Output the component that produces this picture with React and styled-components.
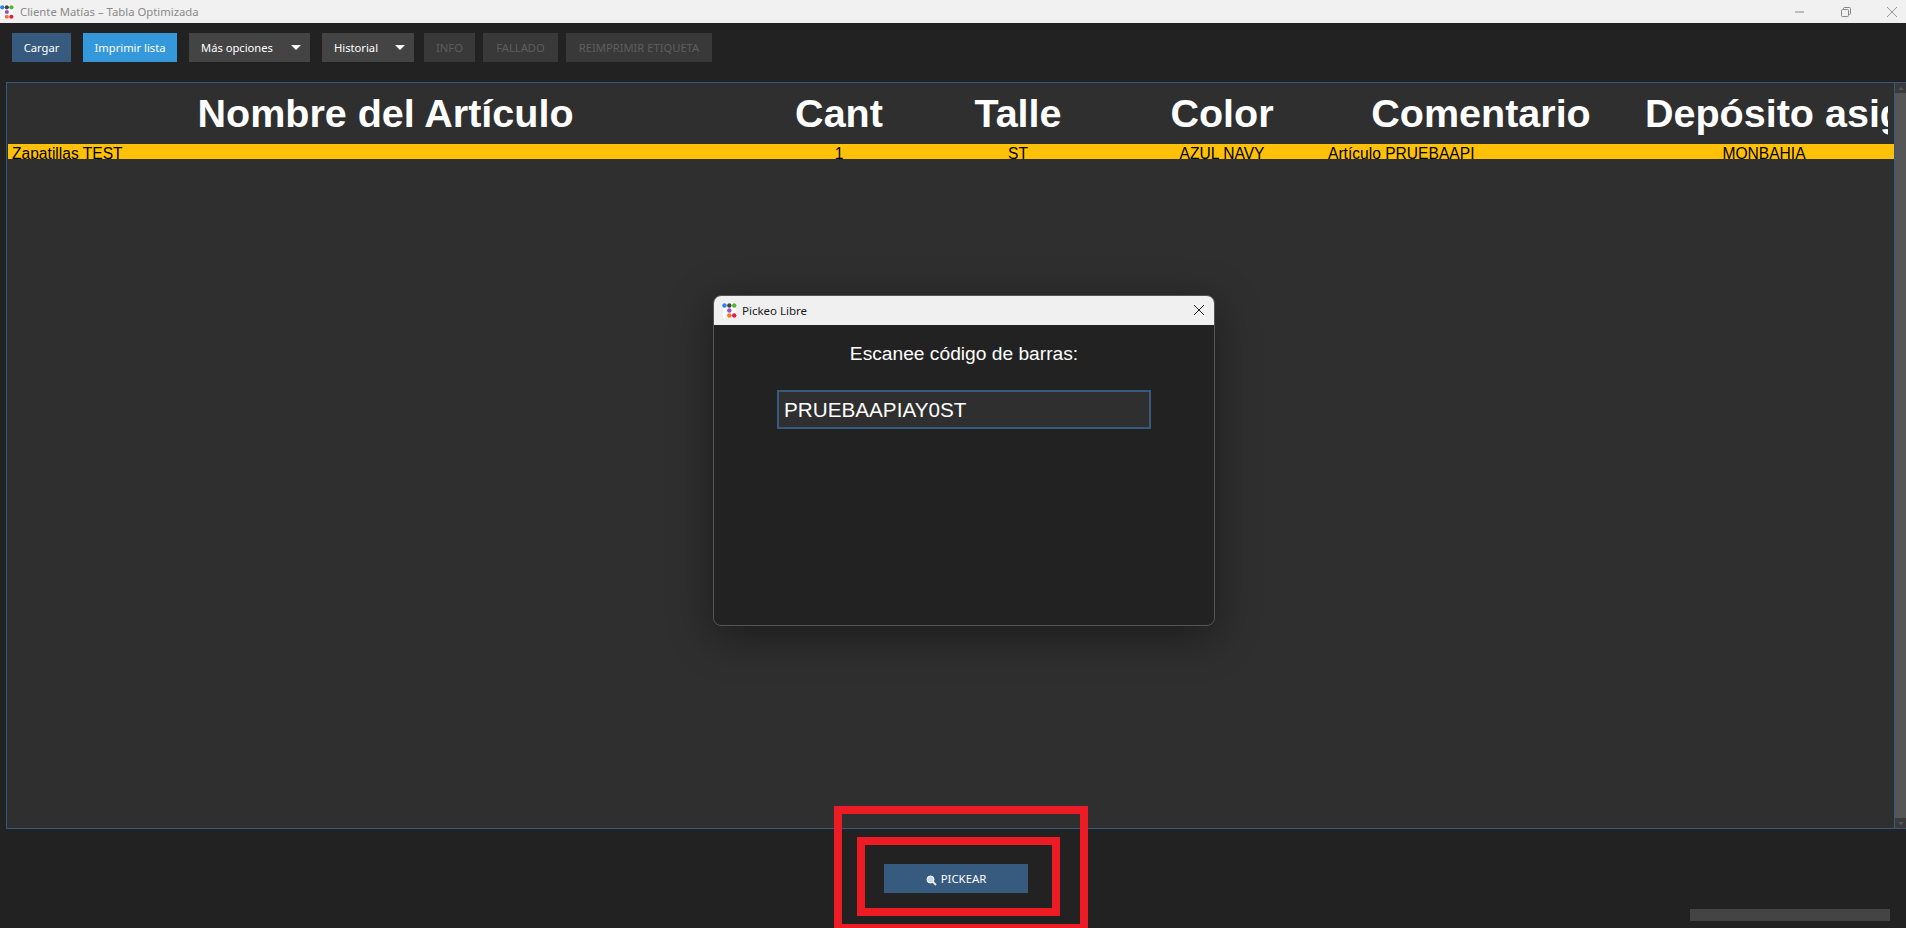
import React from "react";
import styled, { createGlobalStyle } from "styled-components";

const Global = createGlobalStyle`
  html, body { margin: 0; padding: 0; height: 100%; background: #222222; overflow: hidden; }
  #root { height: 100%; }
  * { box-sizing: border-box; }
`;

const Page = styled.div`
  position: relative;
  width: 1906px;
  height: 928px;
  display: flex;
  flex-direction: column;
  background: #222222;
  overflow: hidden;
`;

const TitleBar = styled.header`
  height: 23px;
  flex: none;
  display: flex;
  align-items: center;
  background: #f1f1f1;
`;

const WindowTitle = styled.span`
  margin-left: 6px;
  font: 11.3px "Noto Sans", sans-serif;
  color: #8a8a8a;
  white-space: nowrap;
`;

const WindowControls = styled.div`
  margin-left: auto;
  display: flex;
  align-items: center;
  gap: 34px;
  padding-right: 8px;
`;

const Toolbar = styled.nav`
  height: 59px;
  flex: none;
  display: flex;
  align-items: flex-start;
  padding: 10px 0 0 12px;
`;

const ToolButton = styled.div`
  height: 29px;
  width: ${(p) => p.$w}px;
  margin-right: ${(p) => p.$gap}px;
  display: flex;
  align-items: center;
  justify-content: ${(p) => (p.$menu ? "flex-start" : "center")};
  padding-left: ${(p) => (p.$menu ? "12px" : "0")};
  background: ${(p) => p.$bg};
  color: ${(p) => p.$fg || "#ffffff"};
  font: 11.2px "Noto Sans", sans-serif;
  white-space: nowrap;
  flex: none;
`;

const Caret = styled.span`
  margin-left: auto;
  margin-right: 9px;
  width: 0;
  height: 0;
  border-left: 5px solid transparent;
  border-right: 5px solid transparent;
  border-top: 5px solid #ffffff;
`;

const TableFrame = styled.section`
  flex: none;
  height: 747px;
  margin-left: 6px;
  display: flex;
  background: #2f2f2f;
  border: 1px solid #315b82;
  border-right: none;
`;

const TableBody = styled.div`
  flex: 1;
  min-width: 0;
  display: flex;
  flex-direction: column;
  padding-left: 1px;
`;

const HeaderRow = styled.div`
  height: 61px;
  flex: none;
  display: grid;
  grid-template-columns: ${(p) => p.$cols};
  align-items: center;
`;

const HeaderCell = styled.div`
  font: bold 39.5px "Liberation Sans", Arial, sans-serif;
  color: #ffffff;
  text-align: center;
  white-space: nowrap;
  overflow: hidden;
`;

const ClippedHeaderCell = styled(HeaderCell)`
  text-align: left;
  margin: 0 6px 0 11px;
`;

const DataRow = styled.div`
  height: 15px;
  flex: none;
  display: grid;
  grid-template-columns: ${(p) => p.$cols};
  background: #ffc107;
  overflow: hidden;
`;

const DataCell = styled.div`
  font: 15.6px/19px "Liberation Sans", Arial, sans-serif;
  color: #000000;
  text-align: ${(p) => p.$align || "center"};
  padding-left: ${(p) => p.$pad || 0}px;
  white-space: nowrap;
  overflow: hidden;
`;

const Scrollbar = styled.div`
  width: 12px;
  flex: none;
  display: flex;
  flex-direction: column;
  background: #3a3a3a;
  border-left: 1px solid #315b82;
`;

const ScrollArrow = styled.div`
  height: 10px;
  flex: none;
  display: flex;
  align-items: center;
  justify-content: center;
  background: #3a3a3a;
`;

const ArrowUp = styled.span`
  width: 0;
  height: 0;
  border-left: 3px solid transparent;
  border-right: 3px solid transparent;
  border-bottom: 3px solid #555555;
`;

const ArrowDown = styled.span`
  width: 0;
  height: 0;
  border-left: 3px solid transparent;
  border-right: 3px solid transparent;
  border-top: 3px solid #555555;
`;

const ScrollThumb = styled.div`
  flex: 1;
  background: #565656;
`;

const Footer = styled.footer`
  flex: 1;
  display: grid;
  grid-template-columns: 884px 144px 1fr;
  align-items: start;
  padding-top: 35px;
`;

const PickButton = styled.div`
  grid-column: 2;
  height: 29px;
  display: flex;
  align-items: center;
  justify-content: center;
  gap: 4px;
  background: #375a7f;
  color: #ffffff;
  font: 11.4px "Noto Sans", sans-serif;
`;

const PickIcon = styled.svg`
  flex: none;
  margin-top: 3px;
`;

const Progress = styled.div`
  grid-column: 3;
  justify-self: end;
  margin: 45px 16px 0 0;
  width: 200px;
  height: 12px;
  background: #444444;
`;

const Dialog = styled.div`
  position: absolute;
  left: 713px;
  top: 295px;
  width: 502px;
  height: 331px;
  display: flex;
  flex-direction: column;
  background: #222222;
  border: 1px solid #555555;
  border-radius: 8px;
  box-shadow: 0 10px 44px rgba(0, 0, 0, 0.42);
  overflow: hidden;
`;

const DialogTitleBar = styled.div`
  height: 30px;
  flex: none;
  display: flex;
  align-items: center;
  padding: 0 10px 0 9px;
  background: #f0f0f0;
  margin: -1px -1px 0;
`;

const DialogTitle = styled.span`
  margin-left: 5px;
  font: 11.5px "Noto Sans", sans-serif;
  color: #1a1a1a;
`;

const CloseGlyph = styled.span`
  margin-left: auto;
  display: flex;
`;

const DialogBody = styled.div`
  flex: 1;
  display: flex;
  flex-direction: column;
  align-items: center;
`;

const Prompt = styled.div`
  margin-top: 18px;
  font: 19.2px/22px "Liberation Sans", Arial, sans-serif;
  color: #ffffff;
`;

const CodeInput = styled.div`
  margin-top: 26px;
  width: 372px;
  height: 37px;
  display: flex;
  align-items: center;
  padding-left: 5px;
  background: #2f2f2f;
  border: 1px solid #375a7f;
  outline: 0.5px solid #375a7f;
  font: 20.7px "Liberation Sans", Arial, sans-serif;
  color: #ffffff;
`;

const Annotation = styled.div`
  position: absolute;
  left: ${(p) => p.$x}px;
  top: ${(p) => p.$y}px;
  width: ${(p) => p.$w}px;
  height: ${(p) => p.$h}px;
  border: 8px solid #ed1c24;
  pointer-events: none;
`;

const AppIcon = ({ size = 16 }) => (
  <svg width={size} height={size} viewBox="0 0 16 16" style={{ flex: "none" }}>
    <rect x="1" y="0" width="14" height="16" fill="#ffffff" />
    <circle cx="2.6" cy="2.6" r="2.4" fill="#2f7fe8" />
    <circle cx="7.8" cy="2.6" r="2.4" fill="#444444" />
    <circle cx="13" cy="2.6" r="2.4" fill="#4fb82f" />
    <circle cx="7.8" cy="8" r="2.4" fill="#9b4fd0" />
    <circle cx="7.8" cy="13.4" r="2.4" fill="#f47b20" />
    <circle cx="13" cy="13.4" r="2.4" fill="#e8194f" />
  </svg>
);

const COLS = "755px 152px 206px 202px 5px 306px 1fr";

export default function App() {
  return (
    <Page>
      <Global />
      <TitleBar>
        <AppIcon size={14} />
        <WindowTitle>Cliente Matías – Tabla Optimizada</WindowTitle>
        <WindowControls>
          <svg width="12" height="12" viewBox="0 0 12 12">
            <path d="M1 6h9" stroke="#888" strokeWidth="1" />
          </svg>
          <svg width="12" height="12" viewBox="0 0 12 12" fill="none" stroke="#888">
            <rect x="1.5" y="3.5" width="7" height="7" rx="1" />
            <path d="M3.5 3v-.5a1 1 0 0 1 1-1h5a1 1 0 0 1 1 1v5a1 1 0 0 1-1 1H9" />
          </svg>
          <svg width="12" height="12" viewBox="0 0 12 12" fill="none" stroke="#999">
            <path d="M1 1l10 10M11 1L1 11" />
          </svg>
        </WindowControls>
      </TitleBar>

      <Toolbar>
        <ToolButton $w={59} $gap={12} $bg="#375a7f">Cargar</ToolButton>
        <ToolButton $w={94} $gap={12} $bg="#3498db">Imprimir lista</ToolButton>
        <ToolButton $w={121} $gap={12} $bg="#444444" $menu>Más opciones<Caret /></ToolButton>
        <ToolButton $w={92} $gap={10} $bg="#444444" $menu>Historial<Caret /></ToolButton>
        <ToolButton $w={51} $gap={8} $bg="#393939" $fg="#5e5e5e">INFO</ToolButton>
        <ToolButton $w={75} $gap={8} $bg="#393939" $fg="#5e5e5e">FALLADO</ToolButton>
        <ToolButton $w={146} $gap={0} $bg="#393939" $fg="#5e5e5e">REIMPRIMIR ETIQUETA</ToolButton>
      </Toolbar>

      <TableFrame>
        <TableBody>
          <HeaderRow $cols={COLS}>
            <HeaderCell>Nombre del Artículo</HeaderCell>
            <HeaderCell>Cant</HeaderCell>
            <HeaderCell>Talle</HeaderCell>
            <HeaderCell>Color</HeaderCell>
            <span />
            <HeaderCell>Comentario</HeaderCell>
            <ClippedHeaderCell>Depósito asignado</ClippedHeaderCell>
          </HeaderRow>
          <DataRow $cols={COLS}>
            <DataCell $align="left" $pad={4}>Zapatillas TEST</DataCell>
            <DataCell>1</DataCell>
            <DataCell>ST</DataCell>
            <DataCell>AZUL NAVY</DataCell>
            <span />
            <DataCell $align="left">Artículo PRUEBAAPI</DataCell>
            <DataCell>MONBAHIA</DataCell>
          </DataRow>
        </TableBody>
        <Scrollbar>
          <ScrollArrow><ArrowUp /></ScrollArrow>
          <ScrollThumb />
          <ScrollArrow><ArrowDown /></ScrollArrow>
        </Scrollbar>
      </TableFrame>

      <Footer>
        <PickButton>
          <PickIcon width="11" height="11" viewBox="0 0 11 11">
            <circle cx="4.5" cy="4.5" r="3.5" fill="#c9d9ee" stroke="#ffffff" />
            <path d="M7 7l3 3" stroke="#f4e2cc" strokeWidth="2" />
          </PickIcon>
          PICKEAR
        </PickButton>
        <Progress />
      </Footer>

      <Dialog>
        <DialogTitleBar>
          <AppIcon size={15} />
          <DialogTitle>Pickeo Libre</DialogTitle>
          <CloseGlyph>
            <svg width="12" height="12" viewBox="0 0 12 12" fill="none" stroke="#222">
              <path d="M1 1l10 10M11 1L1 11" />
            </svg>
          </CloseGlyph>
        </DialogTitleBar>
        <DialogBody>
          <Prompt>Escanee código de barras:</Prompt>
          <CodeInput>PRUEBAAPIAY0ST</CodeInput>
        </DialogBody>
      </Dialog>

      <Annotation $x={834} $y={806} $w={254} $h={126} />
      <Annotation $x={857} $y={837} $w={203} $h={79} />
    </Page>
  );
}
